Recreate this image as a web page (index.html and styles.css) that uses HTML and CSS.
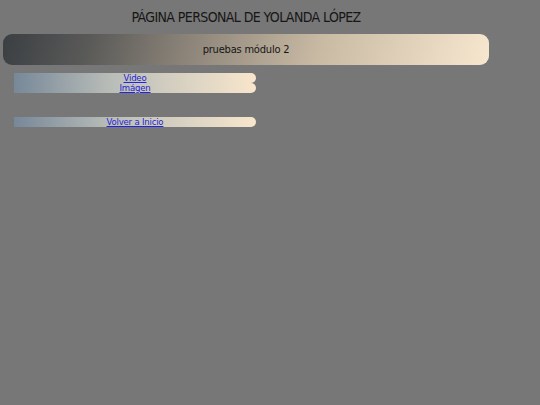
FILE: index.html
```html
<!DOCTYPE html>
<html lang="es">
<head>
<meta charset="utf-8">
<title>Yolanda López</title>
<link rel="stylesheet" href="styles.css">
</head>
<body>
<div class="page">
  <h1 class="title">PÁGINA PERSONAL DE YOLANDA LÓPEZ</h1>
  <div class="banner">pruebas módulo 2</div>
  <ul class="menu">
    <li class="item"><a href="#">Video</a></li>
    <li class="item"><a href="#">Imágen</a></li>
  </ul>
  <div class="back"><a href="#">Volver a Inicio</a></div>
</div>
</body>
</html>
```
FILE: styles.css
```css
html, body {
  margin: 0;
  padding: 0;
  background: #777777;
}
body {
  font-family: "DejaVu Sans Condensed", "DejaVu Sans", sans-serif;
  font-stretch: condensed;
  color: #111111;
}
.page {
  width: 486px;
  margin-left: 3px;
  padding-top: 9px;
}
.title {
  margin: 0;
  font-size: 14px;
  font-weight: 400;
  text-align: center;
  line-height: 17px;
  height: 25px;
  letter-spacing: -0.6px;
  color: #161616;
}
.banner {
  height: 31px;
  border-radius: 9px;
  background: linear-gradient(105deg, #3b3f43 0%, #5a5a58 18%, #8c8479 38%, #c9baa4 65%, #f7e7cf 100%);
  display: flex;
  align-items: center;
  justify-content: center;
  font-size: 11px;
  letter-spacing: -0.2px;
  color: #151515;
}
.menu {
  list-style: none;
  margin: 8px 0 0 11px;
  padding: 0;
  width: 242px;
}
.item, .back {
  height: 10px;
  line-height: 10px;
  font-size: 9.5px;
  letter-spacing: -0.2px;
  text-align: center;
  border-radius: 0 5px 5px 0;
  background: linear-gradient(90deg, #778899 0%, #b9bdb8 40%, #f8e6cc 100%);
}
.back {
  width: 242px;
  margin: 24px 0 0 11px;
}
a {
  color: #2525d8;
  text-decoration: underline;
}
```
